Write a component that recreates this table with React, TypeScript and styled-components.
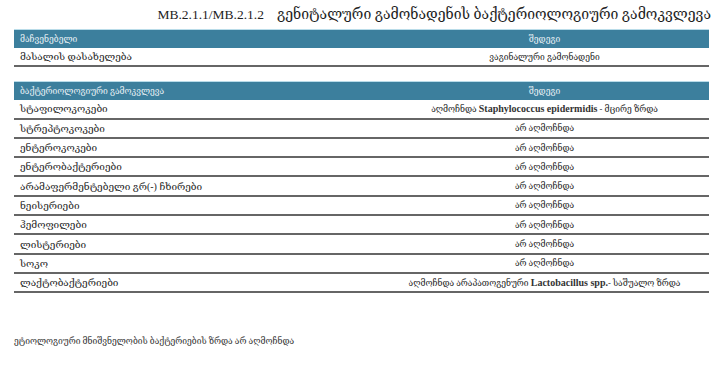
import React from 'react';
import styled, { createGlobalStyle } from 'styled-components';

const GlobalStyle = createGlobalStyle`
  body {
    margin: 0;
    background: #ffffff;
    font-family: "Liberation Serif", "DejaVu Serif", serif;
    color: #222;
  }
`;

const Page = styled.div`
  width: 720px;
  height: 379px;
  padding: 6px 9px 0 14px;
  box-sizing: border-box;
`;

const Title = styled.h1`
  margin: 0 0 6px 0;
  text-align: right;
  font-size: 14px;
  font-weight: normal;
  line-height: 17px;
  color: #1e1e1e;
  white-space: nowrap;
`;

const Code = styled.span`
  font-size: 13.5px;
  margin-right: 13px;
`;

const Table = styled.table<{ $gap?: number }>`
  width: calc(100% - 2px);
  border-collapse: collapse;
  margin-bottom: ${(p) => p.$gap ?? 0}px;
`;

const HeadCell = styled.th<{ $center?: boolean }>`
  background: #3c7f9d;
  color: #e8f1f5;
  font-weight: normal;
  font-size: 8.5px;
  height: 18px;
  padding: 0 6px;
  text-align: ${(p) => (p.$center ? 'center' : 'left')};
  border-top: 1px solid #b9dce9;
`;

const Cell = styled.td<{ $center?: boolean }>`
  font-size: ${(p) => (p.$center ? 8.5 : 10)}px;
  height: 17.3px;
  padding: 0 6px;
  text-align: ${(p) => (p.$center ? 'center' : 'left')};
  border-bottom: 2px solid #666;
  color: #1f1f1f;
  white-space: nowrap;
`;

const Latin = styled.span`
  font-size: 10px;
  font-weight: bold;
  color: #333;
`;

const Footer = styled.p`
  margin: 43px 0 0 0;
  font-size: 8.5px;
  color: #333;
`;

const rows: [string, React.ReactNode][] = [
  ['სტაფილოკოკები', <>აღმოჩნდა <Latin>Staphylococcus epidermidis</Latin> - მცირე ზრდა</>],
  ['სტრეპტოკოკები', 'არ აღმოჩნდა'],
  ['ენტეროკოკები', 'არ აღმოჩნდა'],
  ['ენტერობაქტერიები', 'არ აღმოჩნდა'],
  ['არამაფერმენტებელი გრ(-) ჩხირები', 'არ აღმოჩნდა'],
  ['ნეისერიები', 'არ აღმოჩნდა'],
  ['ჰემოფილები', 'არ აღმოჩნდა'],
  ['ლისტერიები', 'არ აღმოჩნდა'],
  ['სოკო', 'არ აღმოჩნდა'],
  ['ლაქტობაქტერიები', <>აღმოჩნდა არაპათოგენური <Latin>Lactobacillus spp.</Latin>- საშუალო ზრდა</>],
];

const App: React.FC = () => {
  return (
    <Page>
      <GlobalStyle />
      <Title>
        <Code>MB.2.1.1/MB.2.1.2</Code>
        გენიტალური გამონადენის ბაქტერიოლოგიური გამოკვლევა
      </Title>
      <Table $gap={14}>
        <colgroup>
          <col style={{ width: '366px' }} />
          <col />
        </colgroup>
        <thead>
          <tr>
            <HeadCell>მაჩვენებელი</HeadCell>
            <HeadCell $center>შედეგი</HeadCell>
          </tr>
        </thead>
        <tbody>
          <tr>
            <Cell>მასალის დასახელება</Cell>
            <Cell $center>ვაგინალური გამონადენი</Cell>
          </tr>
        </tbody>
      </Table>
      <Table>
        <colgroup>
          <col style={{ width: '366px' }} />
          <col />
        </colgroup>
        <thead>
          <tr>
            <HeadCell>ბაქტერიოლოგიური გამოკვლევა</HeadCell>
            <HeadCell $center>შედეგი</HeadCell>
          </tr>
        </thead>
        <tbody>
          {rows.map(([name, result]) => (
            <tr key={name}>
              <Cell>{name}</Cell>
              <Cell $center>{result}</Cell>
            </tr>
          ))}
        </tbody>
      </Table>
      <Footer>ეტიოლოგიური მნიშვნელობის ბაქტერიების ზრდა არ აღმოჩნდა</Footer>
    </Page>
  );
};

export default App;
